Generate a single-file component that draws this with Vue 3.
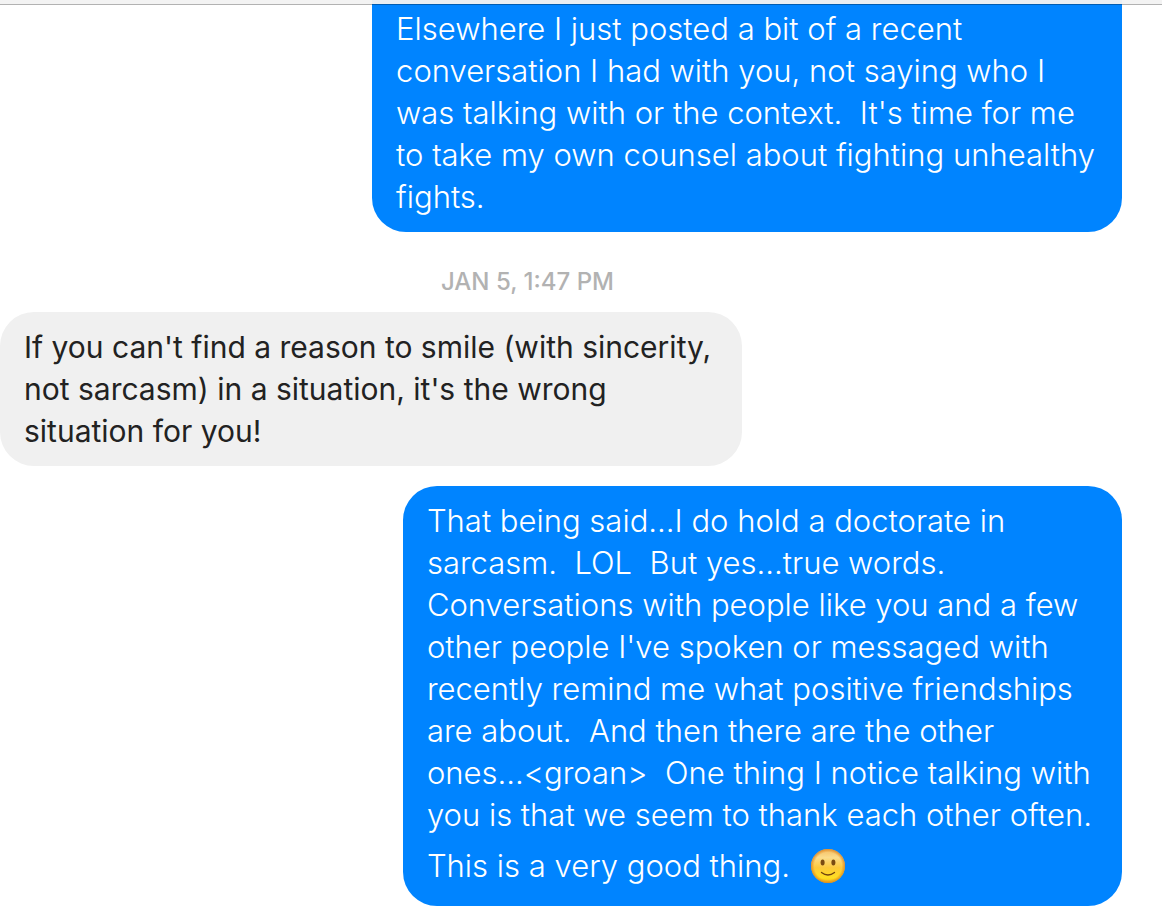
<script setup>
const first = ['Elsewhere I just posted a bit of a recent', 'conversation I had with you, not saying who I', "was talking with or the context.\u00a0 It's time for me", 'to take my own counsel about fighting unhealthy', 'fights.']
const reply = ["If you can't find a reason to smile (with sincerity,", "not sarcasm) in a situation, it's the wrong", 'situation for you!']
const last = ['That being said...I do hold a doctorate in', 'sarcasm.\u00a0 LOL\u00a0 But yes...true words.', 'Conversations with people like you and a few', "other people I've spoken or messaged with", 'recently remind me what positive friendships', 'are about.\u00a0 And then there are the other', 'ones...<groan>\u00a0 One thing I notice talking with', 'you is that we seem to thank each other often.']
</script>

<template>
  <main class="chat">
    <div class="edge"></div>
    <section class="bubble sent first">
      <p v-for="line in first" :key="line">{{ line }}</p>
    </section>
    <time class="stamp">JAN 5, 1:47 PM</time>
    <section class="bubble received">
      <p v-for="line in reply" :key="line">{{ line }}</p>
    </section>
    <section class="bubble sent last">
      <p v-for="line in last" :key="line">{{ line }}</p>
      <p class="closing">
        <span>This is a very good thing.</span>
        <svg class="smile" viewBox="0 0 36 36" role="img" aria-label="Slightly smiling face">
          <defs>
            <linearGradient id="face" x1="0" y1="0" x2="0" y2="1">
              <stop offset="0" stop-color="#f5bd62" />
              <stop offset="0.25" stop-color="#fbdc8c" />
              <stop offset="0.55" stop-color="#fcc93c" />
              <stop offset="0.85" stop-color="#ffdf20" />
              <stop offset="1" stop-color="#f2b21c" />
            </linearGradient>
            <radialGradient id="rim">
              <stop offset="0.8" stop-color="#e18a20" stop-opacity="0" />
              <stop offset="1" stop-color="#d98324" stop-opacity="0.85" />
            </radialGradient>
          </defs>
          <circle cx="18" cy="18" r="17" fill="url(#face)" />
          <circle cx="18" cy="18" r="17" fill="url(#rim)" />
          <ellipse cx="12.600" cy="14.500" rx="2" ry="2.900" fill="#7a4a12" />
          <ellipse cx="23.400" cy="14.500" rx="2" ry="2.900" fill="#7a4a12" />
          <path d="M11.500 24.500Q18 29.500 24.500 24.500" fill="none" stroke="#70430f" stroke-width="1.300" stroke-linecap="round" />
        </svg>
      </p>
    </section>
  </main>
</template>

<style>
body { margin: 0; background: #fff; }
</style>

<style scoped>
.chat {
  display: flex;
  flex-direction: column;
  font-family: Inter, "Liberation Sans", sans-serif;
  font-size: 31px;
  line-height: 42px;
}
.edge {
  position: relative;
  z-index: 1;
  height: 4px;
  margin-bottom: -5px;
  background: rgba(243, 243, 243, 0.96);
  background-clip: padding-box;
  border-bottom: 1px solid rgba(0, 0, 0, 0.3);
}
.bubble { border-radius: 34px; box-sizing: border-box; }
p { margin: 0; white-space: nowrap; }
.sent { align-self: flex-end; margin-right: 40px; background: #0084ff; color: #fff; font-weight: 300; }
.first { padding: 8px 27px 14px 24px; border-radius: 0 0 34px 34px; }
.stamp { align-self: flex-start; margin: 32px 0 12px 441px; font-size: 24px; font-weight: 500; line-height: 36px; color: #b2b2b2; }
.received { align-self: flex-start; padding: 14px 31px 14px 24px; background: #f0f0f0; color: #222; font-size: 30px; }
.last { margin-top: 20px; padding: 14px 30px 14px 24px; }
.closing { display: flex; align-items: center; gap: 20px; padding-top: 4px; height: 52px; }
.smile { width: 36px; height: 36px; }
</style>
